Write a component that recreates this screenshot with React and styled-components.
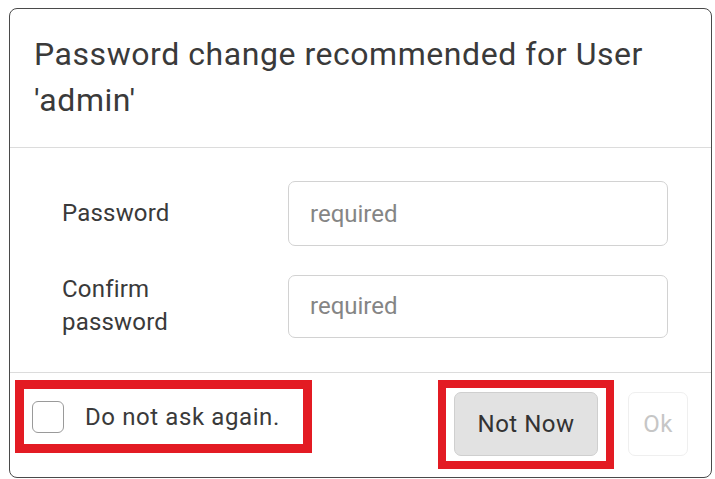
import styled, { createGlobalStyle } from 'styled-components'

const GlobalStyle = createGlobalStyle`
    html, body {
        margin: 0;
        padding: 0;
        background: #ffffff;
        font-family: Roboto, "Liberation Sans", sans-serif;
    }
`

const Dialog = styled.div`
    box-sizing: border-box;
    width: 703px;
    height: 470px;
    margin: 8px 0 0 9px;
    border: 1.5px solid #4a4a4a;
    border-radius: 8px;
    background: #fff;
    display: flex;
    flex-direction: column;
    overflow: hidden;
`

const Header = styled.div`
    padding: 22px 20px 24px 24px;
    border-bottom: 1.5px solid #dcdcdc;
`

const Title = styled.h4`
    margin: 0;
    font-size: 32px;
    font-weight: 400;
    letter-spacing: 0.55px;
    line-height: 46px;
    color: #3a3a3a;
`

const Body = styled.div`
    display: flex;
    flex-direction: column;
    gap: 27px;
    padding: 33px 41px 33px 52px;
    border-bottom: 1.5px solid #dcdcdc;
`

const Row = styled.div`
    display: flex;
    align-items: center;
`

const Label = styled.label`
    width: 226px;
    flex: none;
    font-size: 24px;
    letter-spacing: 0.2px;
    line-height: 33px;
    color: #3a3a3a;
`

const Input = styled.input`
    box-sizing: border-box;
    width: 380px;
    height: ${p => p.$h}px;
    padding: 0 21px;
    border: 1.5px solid #d2d2d2;
    border-radius: 7px;
    font-family: inherit;
    font-size: 24px;
    color: #333;
    outline: none;

    &::placeholder {
        color: #858585;
    }
`

const Footer = styled.div`
    flex: 1;
    display: flex;
    justify-content: space-between;
    align-items: flex-start;
    padding: 7px 23px 0 5px;
`

const Marked = styled.div`
    box-sizing: border-box;
    display: flex;
    align-items: center;
    width: ${p => p.$w}px;
    height: ${p => p.$h}px;
    padding: ${p => p.$pad};
    border: ${p => p.$t}px solid #e31b23;
`

const Check = styled.span`
    box-sizing: border-box;
    width: 32px;
    height: 32px;
    flex: none;
    border: 1.5px solid #9a9a9a;
    border-radius: 6px;
    background: #fff;
`

const CheckText = styled.span`
    margin-left: 21px;
    font-size: 24px;
    letter-spacing: 0.6px;
    color: #3a3a3a;
`

const Actions = styled.div`
    display: flex;
    align-items: flex-start;
    gap: 14px;
`

const Button = styled.button`
    box-sizing: border-box;
    width: ${p => p.$w}px;
    height: 64px;
    border: 1.5px solid ${p => (p.$muted ? '#efefef' : '#cfcfcf')};
    border-radius: 7px;
    background: ${p => (p.$muted ? '#fff' : '#e2e2e2')};
    color: ${p => (p.$muted ? '#c6c6c6' : '#333')};
    font-family: inherit;
    font-size: 24px;
    letter-spacing: 0.5px;
    padding: 0;
`

const OkWrap = styled.div`
    padding-top: 12px;
`

function App() {
    return (
        <>
            <GlobalStyle />
            <Dialog>
                <Header>
                    <Title>Password change recommended for User 'admin'</Title>
                </Header>
                <Body>
                    <Row>
                        <Label>Password</Label>
                        <Input $h={65} type="password" placeholder="required" />
                    </Row>
                    <Row>
                        <Label>Confirm<br />password</Label>
                        <Input $h={63} type="password" placeholder="required" />
                    </Row>
                </Body>
                <Footer>
                    <Marked $w={297} $h={73} $t={9} $pad="0 0 0 8px">
                        <Check />
                        <CheckText>Do not ask again.</CheckText>
                    </Marked>
                    <Actions>
                        <Marked $w={176} $h={89} $t={8} $pad="4px 8px 5px 8px">
                            <Button $w={144}>Not Now</Button>
                        </Marked>
                        <OkWrap>
                            <Button $w={60} $muted disabled>Ok</Button>
                        </OkWrap>
                    </Actions>
                </Footer>
            </Dialog>
        </>
    )
}

export default App
